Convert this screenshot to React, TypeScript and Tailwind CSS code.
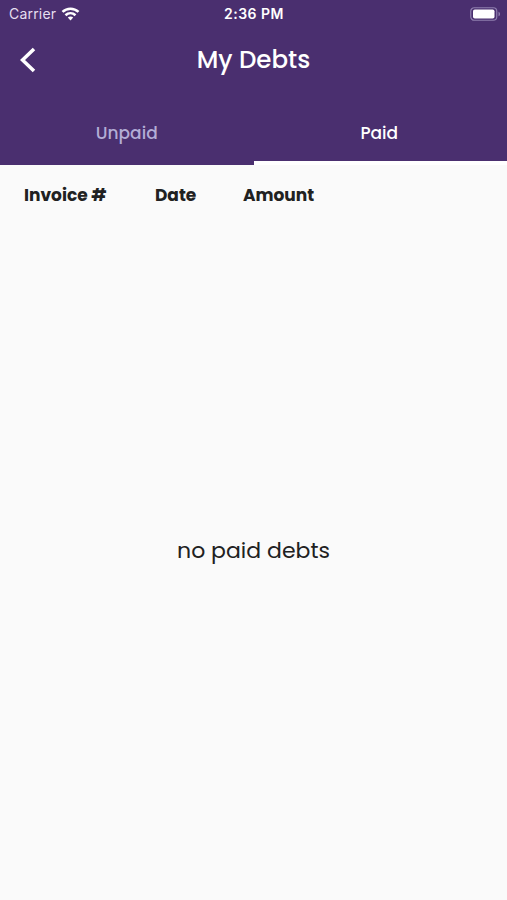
import { useState } from 'react';

type Tab = 'unpaid' | 'paid';

const tabs: { id: Tab; label: string }[] = [
  { id: 'unpaid', label: 'Unpaid' },
  { id: 'paid', label: 'Paid' },
];

function StatusBar() {
  return (
    <div className="grid h-[27px] grid-cols-3 items-center pl-[9px] pr-[6px] font-['Inter',sans-serif] text-[14px] leading-none">
      <div className="flex items-center gap-[5px]">
        <span className="text-[#e6dff0] tracking-[0.2px]">Carrier</span>
        <svg width="19" height="14" viewBox="0 0 18 14" fill="none" stroke="white" strokeWidth="2.6">
          <path d="M1 4.9C5.5 0.6 12.5 0.6 17 4.9" />
          <path d="M4 8.2C6.9 5.5 11.1 5.5 14 8.2" />
          <path d="M6.3 10.6C7.8 9.2 10.2 9.2 11.7 10.6L9 13.4Z" fill="white" stroke="none" />
        </svg>
      </div>
      <span className="-ml-[2px] text-center font-semibold tracking-[0.5px]">2:36 PM</span>
      <svg className="justify-self-end" width="31" height="14" viewBox="0 0 31 14">
        <rect x="0.75" y="0.75" width="26" height="12.5" rx="3.5" fill="none" stroke="#8f7fae" strokeWidth="1.2" />
        <rect x="3" y="2.5" width="21.5" height="9" rx="1.8" fill="white" />
        <path d="M28.5 4.7C30.5 5.4 30.5 8.6 28.5 9.3Z" fill="#8f7fae" />
      </svg>
    </div>
  );
}

export default function App() {
  const [active, setActive] = useState<Tab>('paid');

  return (
    <div className="flex h-[900px] w-[507px] flex-col overflow-hidden bg-[#fafafa] font-['Poppins','Inter',sans-serif] text-[#212121]">
      <header className="h-[165px] bg-[#4a2f6f] text-white">
        <StatusBar />

        <div className="grid h-[66px] grid-cols-[56px_1fr_56px] items-center">
          <button className="flex h-full items-center pl-5" aria-label="Back">
            <svg width="16" height="26" viewBox="0 0 16 26" fill="none" stroke="white" strokeWidth="3.6">
              <path d="M14 2L2.5 13L14 24" />
            </svg>
          </button>
          <h1 className="text-center text-[24.5px] font-medium leading-none">My Debts</h1>
        </div>

        <div className="grid h-[72px] grid-cols-2">
          {tabs.map((tab) => (
            <button
              key={tab.id}
              onClick={() => setActive(tab.id)}
              className={`border-b-4 pt-[13px] text-[17px] font-medium leading-none ${
                active === tab.id ? 'border-white pr-[2px] text-white' : 'border-transparent text-[#b3add6]'
              }`}
            >
              {tab.label}
            </button>
          ))}
        </div>
      </header>

      <div className="flex h-[60px] items-center pl-6 text-[17px] font-bold leading-none">
        <span className="w-[131px]">Invoice #</span>
        <span className="w-[88px]">Date</span>
        <span>Amount</span>
      </div>

      <main className="flex h-[652px] items-center justify-center">
        <p className="text-[22px] leading-none">no paid debts</p>
      </main>
    </div>
  );
}
